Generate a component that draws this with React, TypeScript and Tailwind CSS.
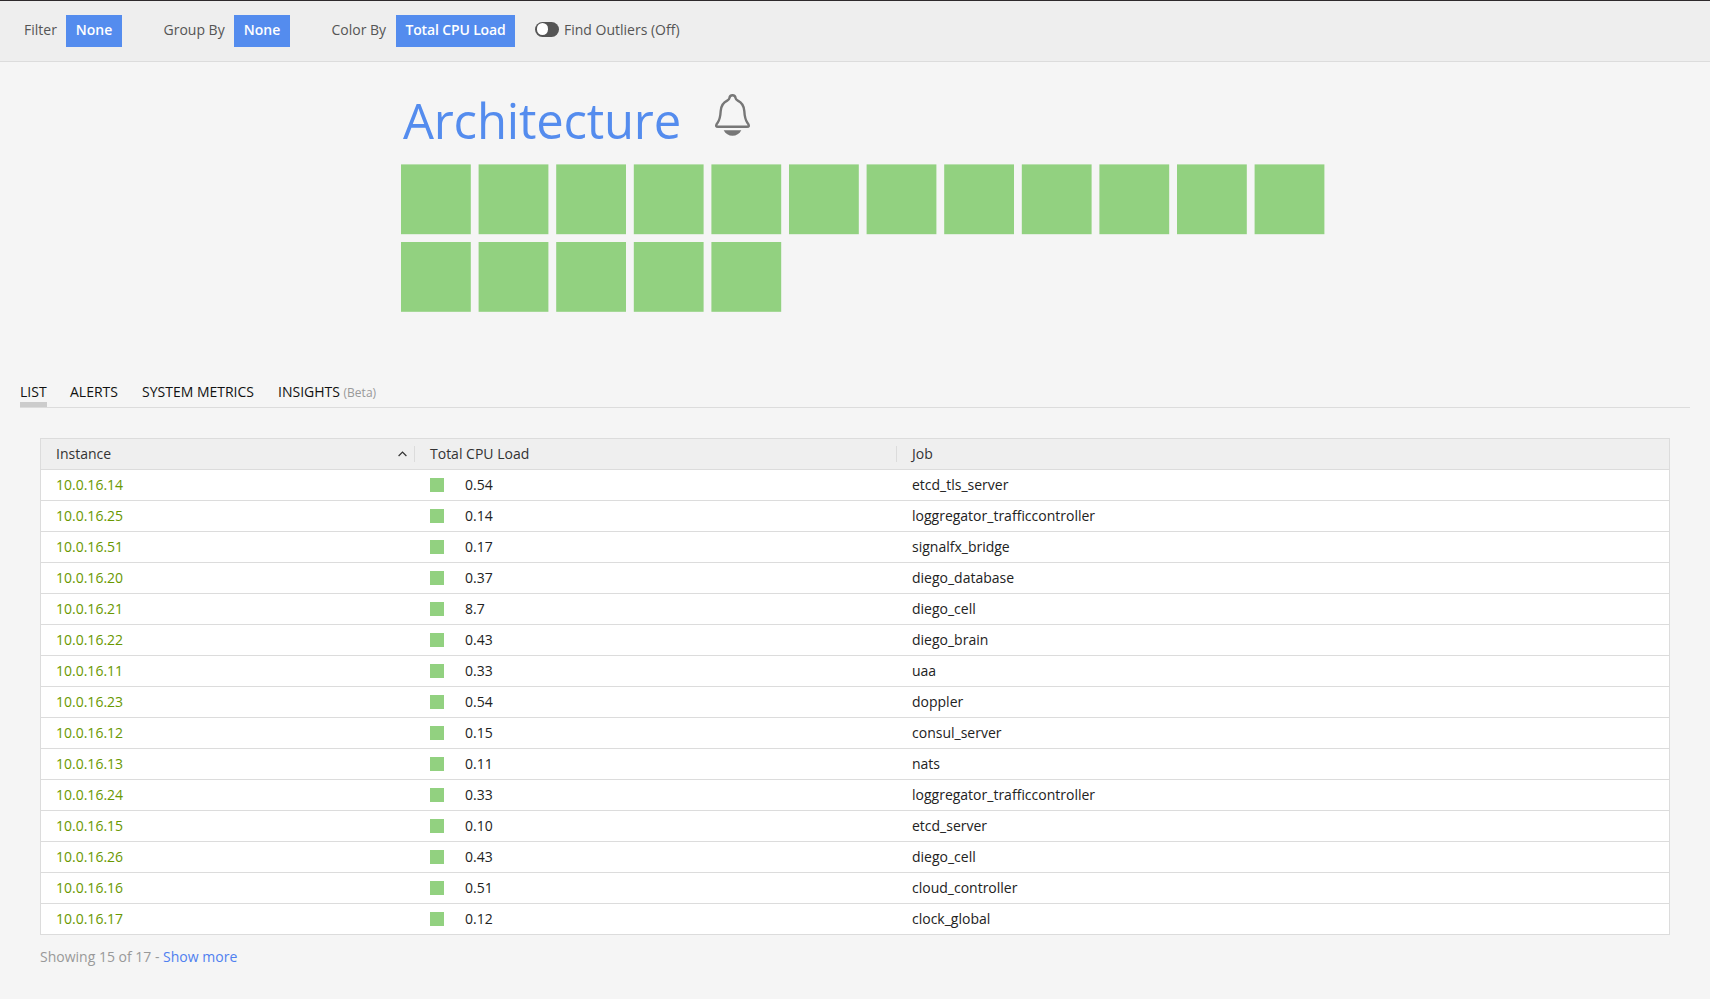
const rows: [string, string, string][] = [
  ['10.0.16.14', '0.54', 'etcd_tls_server'],
  ['10.0.16.25', '0.14', 'loggregator_trafficcontroller'],
  ['10.0.16.51', '0.17', 'signalfx_bridge'],
  ['10.0.16.20', '0.37', 'diego_database'],
  ['10.0.16.21', '8.7', 'diego_cell'],
  ['10.0.16.22', '0.43', 'diego_brain'],
  ['10.0.16.11', '0.33', 'uaa'],
  ['10.0.16.23', '0.54', 'doppler'],
  ['10.0.16.12', '0.15', 'consul_server'],
  ['10.0.16.13', '0.11', 'nats'],
  ['10.0.16.24', '0.33', 'loggregator_trafficcontroller'],
  ['10.0.16.15', '0.10', 'etcd_server'],
  ['10.0.16.26', '0.43', 'diego_cell'],
  ['10.0.16.16', '0.51', 'cloud_controller'],
  ['10.0.16.17', '0.12', 'clock_global'],
];

const HOST_COUNT = 17;
const PER_ROW = 12;
const PITCH = 77.6;
const CELL = 69.8;

function FilterBar() {
  return (
    <header className="flex h-[62px] items-start border-t border-b border-t-[#2e292c] border-b-[#dcdcdc] bg-[#eeeeee] pt-3.5 pl-6 text-[#555555]">
      <div className="flex h-8 w-[139.5px] items-center">
        <span className="w-[42px] pb-0.5">Filter</span>
        <button className="h-8 w-14 bg-[#548cee] pb-0.5 font-semibold text-white">None</button>
      </div>
      <div className="flex h-8 w-[168px] items-center">
        <span className="w-[70.5px] pb-0.5">Group By</span>
        <button className="h-8 w-14 bg-[#548cee] pb-0.5 font-semibold text-white">None</button>
      </div>
      <div className="flex h-8 items-center">
        <span className="w-[64.5px] pb-0.5">Color By</span>
        <button className="h-8 w-[119px] bg-[#548cee] pb-0.5 font-semibold tracking-[-0.15px] text-white">Total CPU Load</button>
      </div>
      <div className="ml-5 flex h-8 items-center pb-0.5">
        <span className="mb-0.5 flex h-[15px] w-6 items-center rounded-full bg-[#555555] pl-[1.5px]">
          <span className="h-3 w-[11px] rounded-full bg-white" />
        </span>
        <span className="ml-[5px]">Find Outliers (Off)</span>
      </div>
    </header>
  );
}

function Bell() {
  return (
    <svg className="mt-[31px] ml-[35px] h-[44px] w-[36px]" viewBox="0 0 36 44" fill="none">
      <path
        d="M17.5 2.2C15.6 2.2 14.6 3.4 14.4 5.2C14.3 6.4 13.6 6.9 12.2 7.6C7.6 9.8 6 13.4 5.7 18C5.4 23 5.2 26.4 2.6 29.8C1.4 31.4 1 32.2 1.2 33C1.4 33.6 2 33.8 3 33.8H32C33 33.8 33.6 33.6 33.8 33C34 32.2 33.6 31.4 32.4 29.8C29.8 26.4 29.6 23 29.3 18C29 13.4 27.4 9.8 22.8 7.6C21.4 6.9 20.7 6.4 20.6 5.2C20.4 3.4 19.4 2.2 17.5 2.2Z"
        stroke="#777777"
        strokeWidth="2.4"
        strokeLinejoin="round"
      />
      <path d="M8.7 37.2H26.3C24.4 40.8 21.4 42.7 17.5 42.7S10.6 40.8 8.7 37.2Z" fill="#777777" />
    </svg>
  );
}

function HeatMap() {
  return (
    <section className="h-[310px] pl-[401px]">
      <div className="flex h-[102px] items-start">
        <h1 className="mt-[25px] ml-0.5 w-[277px] text-[49px] leading-[67px] tracking-[-0.2px] whitespace-nowrap text-[#548cee]">Architecture</h1>
        <Bell />
      </div>
      <svg className="block h-[150px] w-[930px]" viewBox="0 0 930 150">
        {Array.from({ length: HOST_COUNT }, (_, i) => (
          <rect
            key={i}
            x={(i % PER_ROW) * PITCH}
            y={0.4 + Math.floor(i / PER_ROW) * PITCH}
            width={CELL}
            height={CELL}
            fill="#92d180"
          />
        ))}
      </svg>
    </section>
  );
}

function Tabs() {
  return (
    <nav className="mx-5 flex h-9 items-start border-b border-[#dcdcdc] text-[#111111]">
      <div className="h-[35px] w-[27px] border-b-[5px] border-[#cccccc] pt-[10px]">LIST</div>
      <div className="ml-[23px] w-[72px] pt-[10px]">ALERTS</div>
      <div className="w-[136px] pt-[10px]">SYSTEM METRICS</div>
      <div className="pt-[10px]">
        INSIGHTS <span className="text-xs text-[#999999]">(Beta)</span>
      </div>
    </nav>
  );
}

function InstanceTable() {
  return (
    <div className="mx-10 mt-[30px] border border-[#dcdcdc] bg-white text-[#222222]">
      <div className="flex h-[31px] items-center border-b border-[#dcdcdc] bg-[#efefef] text-[#333333]">
        <div className="flex h-4 w-[374px] items-center justify-between border-r border-[#dcdcdc] pr-[7px] pl-[15px]">
          <span>Instance</span>
          <svg className="h-2 w-[9px]" viewBox="0 0 9 8" fill="none">
            <path d="M0.6 6L4.5 2L8.4 6" stroke="#333333" strokeWidth="1.2" />
          </svg>
        </div>
        <div className="flex h-4 w-[482px] items-center border-r border-[#dcdcdc] pl-[15px]">Total CPU Load</div>
        <div className="pl-[15px]">Job</div>
      </div>
      {rows.map(([ip, load, job]) => (
        <div key={ip} className="flex h-[31px] items-center border-b border-[#dcdcdc] last:h-[30px] last:border-b-0">
          <a className="w-[389px] pl-[15px] text-[#6a9800]">{ip}</a>
          <span className="size-3.5 bg-[#92d180]" />
          <span className="w-[468px] pl-[21px]">{load}</span>
          <span>{job}</span>
        </div>
      ))}
    </div>
  );
}

export default function App() {
  return (
    <main className="h-[999px] overflow-hidden bg-[#f5f5f5] font-['Open_Sans',sans-serif] text-sm">
      <FilterBar />
      <HeatMap />
      <Tabs />
      <InstanceTable />
      <p className="mt-3 ml-10 text-[#999999]">
        Showing 15 of 17 - <a className="text-[#4f80f0]">Show more</a>
      </p>
    </main>
  );
}
